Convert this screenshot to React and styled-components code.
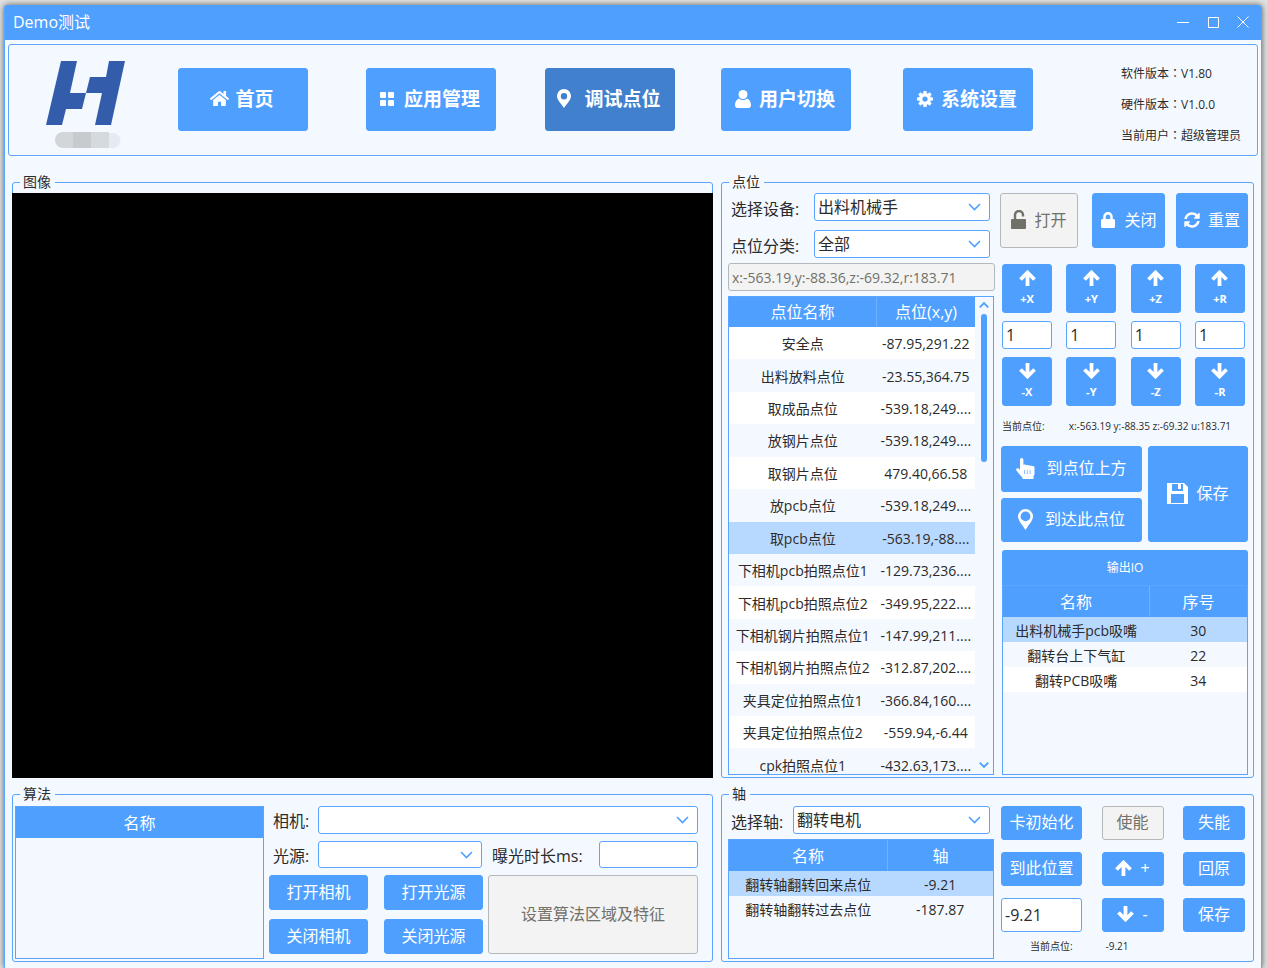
import React from "react";
import styled, { createGlobalStyle, css } from "styled-components";
import { FaHome, FaLock, FaSyncAlt } from "react-icons/fa";

const blue = "#4f9fff";
const line = "#5aa5ff";
const pale = "#f4f9ff";
const selected = "#b8d9ff";
const ink = "#2b2b2b";

const GlobalStyle = createGlobalStyle`
  * { box-sizing: border-box; }
  body {
    margin: 0;
    background: #e2e2e2;
    color: ${ink};
    font-family: "Open Sans", "Noto Sans CJK SC", sans-serif;
    font-size: 16px;
    line-height: 20px;
  }
  button, input, select { font: inherit; margin: 0; }
`;

const Window = styled.div`
  margin: 5px 5px 0 4px;
  min-height: calc(100vh - 5px);
  border: 1px solid ${line};
  border-top: 0;
  border-bottom: 0;
  border-radius: 3px 3px 0 0;
  background: ${pale};
  box-shadow: 0 0 6px rgba(0, 0, 0, 0.6);
`;

const TitleBar = styled.header`
  display: flex;
  align-items: center;
  justify-content: space-between;
  height: 35px;
  padding: 0 12px 2px 8px;
  border-radius: 2px 2px 0 0;
  background: ${blue};
  color: #fff;
`;

const WindowTools = styled.div`
  display: flex;
  gap: 18px;
`;

const WindowTool = styled.button`
  display: flex;
  padding: 0;
  border: 0;
  background: none;
  color: #fff;
`;

const Top = styled.nav`
  display: grid;
  grid-template-columns: 169fr 188fr 179fr 176fr 182fr 218fr 136fr;
  align-items: start;
  height: 112px;
  margin: 4px 3px 16px;
  border: 1px solid ${line};
  border-radius: 3px;
  box-shadow: 0 0 0 1px #fff;
`;

const Brand = styled.div`
  padding: 16px 0 0 37px;
`;

const Versions = styled.ul`
  display: grid;
  gap: 10px;
  margin: 0;
  padding: 18px 0 0;
  list-style: none;
  font-size: 12px;
  white-space: nowrap;
`;

const Colon = styled.span`
  font-family: "Noto Sans CJK TC", sans-serif;
`;

const Button = styled.button`
  display: flex;
  flex-direction: ${(p) => (p.$stacked ? "column" : "row")};
  align-items: center;
  justify-content: center;
  gap: ${(p) => p.$gap ?? 8}px;
  width: ${(p) => (p.$width ? `${p.$width}px` : "auto")};
  height: ${(p) => (p.$height ? `${p.$height}px` : "auto")};
  padding: 0 0 2px;
  border: 1px solid ${blue};
  border-radius: 3px;
  background: ${blue};
  color: #fff;
  white-space: nowrap;
  svg { flex: none; }
  &:disabled {
    border-color: #b5b8ba;
    background: #f3f3f3;
    color: #71716a;
  }
`;

const NavButton = styled(Button)`
  margin-top: 23px;
  padding-right: 2px;
  font-size: 19px;
  font-weight: 700;
  ${(p) => p.$active && css`
    border-color: #4080cc;
    background: #4080cc;
  `}
`;

const JogButton = styled(Button)`
  padding: 2px 0 0;
  font-size: 11px;
  font-weight: 700;
`;

const Main = styled.main`
  display: grid;
  grid-template-columns: 701fr 533fr;
  gap: 6px 8px;
  padding: 0 7px 6px;
`;

const Group = styled.fieldset`
  display: flex;
  flex-direction: column;
  min-width: 0;
  margin: 0;
  padding: 0;
  border: 1px solid ${line};
  border-radius: 3px;
`;

const Legend = styled.legend`
  margin-left: 7px;
  padding: 0 4px 0 3px;
  font-size: 14px;
  line-height: 20px;
`;

const ImageView = styled.div`
  flex: 1;
  margin: 1px -1px -1px;
  background: #000;
`;

const Split = styled.div`
  display: grid;
  flex: 1;
  grid-template-columns: 267fr 247fr;
  column-gap: 6px;
  padding: ${(p) => p.$top}px 5px 2px 6px;
`;

const Column = styled.div`
  display: flex;
  flex-direction: column;
  min-width: 0;
`;

const Field = styled.div`
  display: grid;
  grid-template-columns: ${(p) => p.$label}px 1fr;
  margin: 0 5px ${(p) => p.$after}px 3px;
`;

const Label = styled.label`
  padding-top: 6px;
  white-space: nowrap;
`;

const inputBox = css`
  width: 100%;
  min-width: 0;
  height: ${(p) => p.$height ?? 28}px;
  border: 1px solid ${line};
  border-radius: 3px;
  background: #fff;
  color: ${ink};
`;

const TextBox = styled.input`
  ${inputBox}
  padding: 0 3px;
  &:disabled {
    border-color: #b5b8ba;
    background: #f3f3f3;
    color: #71716a;
    font-size: 14px;
  }
`;

const SelectShell = styled.div`
  display: grid;
  align-items: center;
  > * { grid-area: 1 / 1; }
  svg {
    justify-self: end;
    margin-right: 9px;
    pointer-events: none;
  }
`;

const SelectBox = styled.select`
  ${inputBox}
  appearance: none;
  padding: 0 24px 0 3px;
`;

const ListBox = styled.div`
  display: grid;
  grid-template-columns: 1fr;
  align-items: start;
  flex: ${(p) => (p.$height ? "none" : 1)};
  height: ${(p) => (p.$height ? `${p.$height}px` : "auto")};
  overflow: hidden;
  border: 1px solid ${line};
`;

const PointList = styled(ListBox)`
  grid-template-columns: 1fr 18px;
  grid-template-rows: 100%;
  margin: 5px 1px 0 0;
`;

const AxisList = styled(ListBox)`
  margin-right: 1px;
`;

const Table = styled.table`
  width: 100%;
  height: ${(p) => (p.$height ? `${p.$height}px` : "auto")};
  border-collapse: collapse;
  table-layout: fixed;
  font-size: 14px;
  text-align: center;
  th, td { padding: 0; overflow: hidden; white-space: nowrap; }
  th {
    height: ${(p) => p.$head ?? 31}px;
    background: ${blue};
    color: #fff;
    font-size: 16px;
    font-weight: 400;
  }
  th + th { border-left: 1px solid #6fb0ff; }
  td {
    height: ${(p) => (p.$height ? "auto" : "25px")};
    padding-top: 2px;
  }
`;

const Row = styled.tr`
  background: ${(p) => (p.$selected ? selected : p.$odd ? "#fff" : pale)};
`;

const ScrollBar = styled.div`
  display: flex;
  flex-direction: column;
  align-items: center;
  align-self: stretch;
  gap: 5px;
  padding: 4px 0 5px;
`;

const Thumb = styled.div`
  width: 6px;
  height: 148px;
  margin-bottom: auto;
  border-radius: 3px;
  background: ${blue};
`;

const DeviceButtons = styled.div`
  display: grid;
  grid-template-columns: 92fr 84fr 72fr;
  margin: 0 0 16px -1px;
`;

const JogGrid = styled.div`
  display: grid;
  grid-template-columns: repeat(4, 50px);
  justify-content: space-between;
  row-gap: 8px;
  padding: 0 3px 0 1px;
`;

const Readout = styled.p`
  display: flex;
  gap: 24px;
  margin: 10px 0;
  padding-left: 1px;
  font-size: 10px;
  white-space: nowrap;
`;

const MoveGrid = styled.div`
  display: grid;
  grid-template-columns: 141fr 100fr;
  grid-template-rows: 46px 44px;
  gap: 6px;
  margin-bottom: 8px;
  > :last-child { grid-area: 1 / 2 / 3 / 3; }
`;

const OutputPanel = styled.section`
  display: flex;
  flex: 1;
  flex-direction: column;
  margin-left: 1px;
`;

const PanelTitle = styled.h2`
  margin: 0;
  border-radius: 3px 3px 0 0;
  background: ${blue};
  color: #fff;
  font-size: 12px;
  font-weight: 400;
  line-height: 35px;
  text-align: center;
`;

const Algorithm = styled.div`
  display: grid;
  flex: 1;
  grid-template-columns: 249fr 429fr;
  column-gap: 5px;
  padding: 2px 14px 2px 2px;
`;

const CameraForm = styled.div`
  display: grid;
  grid-template-columns: 49px 164fr 117px 99fr;
  grid-template-rows: 28px 27px;
  align-content: start;
  row-gap: 7px;
`;

const CameraLabel = styled(Label)`
  padding: 5px 0 0 ${(p) => p.$indent ?? 4}px;
`;

const Wide = styled.div`
  grid-column: span 3;
`;

const CameraButtons = styled.div`
  display: grid;
  grid-template-columns: 99fr 16fr 99fr 5fr 210fr;
  grid-template-rows: 35px 35px;
  row-gap: 9px;
  margin-top: 7px;
  > :nth-child(odd) { grid-column: 1; }
  > :nth-child(even) { grid-column: 3; }
  > :last-child { grid-area: 1 / 5 / 3 / 6; }
`;

const AxisGrid = styled.div`
  display: grid;
  grid-template-columns: 81px 62px 62px;
  grid-template-rows: 34px 34px 34px 14px;
  justify-content: space-between;
  align-content: start;
  row-gap: 12px;
  padding-right: 3px;
`;

const AxisReadout = styled.span`
  margin: -8px 0 0 ${(p) => p.$indent}px;
  font-size: 10px;
`;

const Logo = () => (
  <svg width="80" height="88" viewBox="0 0 80 88" role="img" aria-label="H">
    <path d="M15 0h16l-7 32h16l4-16h16l3-16h16L65 64H49l7-32H40l-4 16H20l-4 16H0z" fill="#335cab" />
    <path d="M17 71h1v16h-1a8 8 0 0 1 0-16z" fill="#d2d6d8" />
    <path d="M17 71h10v16H17z" fill="#d2d6d8" />
    <path d="M27 71h18v16H27z" fill="#c7cbcd" />
    <path d="M45 71h18v16H45z" fill="#d5dadf" />
    <path d="M63 72h4a7 7 0 0 1 0 15h-4z" fill="#e5ebf2" />
  </svg>
);

const Chevron = ({ up, size = 13, weight = 1.6 }) => (
  <svg width={size} height="8" viewBox="0 0 13 8" fill="none" stroke={blue} strokeWidth={weight} aria-hidden="true">
    <path d={up ? "M1 7l5.500-5.500L12 7" : "M1 1l5.500 5.500L12 1"} />
  </svg>
);

const Tiles = () => (
  <svg width="14" height="14" viewBox="0 0 14 14" fill="currentColor" aria-hidden="true">
    <rect width="6" height="6" rx="1" />
    <rect x="8" width="6" height="6" rx="1" />
    <rect y="8" width="6" height="6" rx="1" />
    <rect x="8" y="8" width="6" height="6" rx="1" />
  </svg>
);

const Person = () => (
  <svg width="16" height="18" viewBox="0 0 16 18" fill="currentColor" aria-hidden="true">
    <circle cx="8" cy="4.500" r="4.500" />
    <path d="M4 8.500a6 6 0 0 0 8 0c2.500.7 4 3.500 4 6.500 0 2-1 3-2.500 3h-11C1 18 0 17 0 15c0-3 1.500-5.800 4-6.500z" />
  </svg>
);

const Gear = () => (
  <svg width="16" height="16" viewBox="0 0 16 16" fill="currentColor" aria-hidden="true">
    <circle cx="8" cy="8" r="4.300" fill="none" stroke="currentColor" strokeWidth="3.400" />
    {[0, 45, 90, 135, 180, 225, 270, 315].map((a) => (
      <path key={a} d="M6.500 0h3l.3 3H6.200z" transform={`rotate(${a} 8 8)`} />
    ))}
  </svg>
);

const OpenLock = () => (
  <svg width="15" height="19" viewBox="0 0 15 19" fill="currentColor" aria-hidden="true">
    <path d="M1 9h13a1 1 0 0 1 1 1v8a1 1 0 0 1-1 1H1a1 1 0 0 1-1-1v-8a1 1 0 0 1 1-1z" />
    <path d="M4 10V5a4 4 0 0 1 8 0v1.500" fill="none" stroke="currentColor" strokeWidth="2.400" />
  </svg>
);

const Hand = () => (
  <svg width="19" height="21" viewBox="0 0 19 21" aria-hidden="true">
    <path
      d="M4 1.700a1.700 1.700 0 0 1 3.400 0V7c.8-.6 2.600-.5 3.100.3.800-.6 2.500-.4 3 .5.700-.5 1.900-.4 2.400.3 1.200-.4 2.600.2 2.600 1.600V16l-1 2.500V21H6.500v-1.500L4 17 .4 12.500c-1-1.400.6-3 2.100-2L4 11.700z"
      fill="currentColor"
    />
    <path d="M8.500 12v4M11.300 12v4M14.100 12v4" stroke={blue} strokeWidth=".7" />
  </svg>
);

const PinSolid = () => (
  <svg width="14" height="19" viewBox="0 0 14 19" fill="currentColor" fillRule="evenodd" aria-hidden="true">
    <path d="M7 0a7 7 0 0 1 7 7c0 4-4 7.500-7 12C4 14.500 0 11 0 7a7 7 0 0 1 7-7zm0 4a3.200 3.200 0 1 0 0 6.400A3.200 3.200 0 0 0 7 4z" />
  </svg>
);

const PinHollow = () => (
  <svg width="15" height="21" viewBox="0 0 15 21" fill="currentColor" fillRule="evenodd" aria-hidden="true">
    <path d="M7.500 0A7.500 7.500 0 0 1 15 7.500c0 4-4.500 8.500-7.500 13.500C4.500 16 0 11.500 0 7.500A7.500 7.500 0 0 1 7.500 0zm0 2.500a4.900 4.900 0 1 0 0 9.800 4.900 4.900 0 0 0 0-9.800z" />
  </svg>
);

const Arrow = ({ down }) => (
  <svg width="17" height="16" viewBox="0 0 17 16" fill="none" stroke="currentColor" strokeWidth="3.800" aria-hidden="true">
    <path d={down ? "M8.500 0v13M1.500 6.500l7 7 7-7" : "M8.500 16V3M1.500 9.500l7-7 7 7"} />
  </svg>
);

const Disk = () => (
  <svg width="21" height="21" viewBox="0 0 21 21" fill="currentColor" fillRule="evenodd" aria-hidden="true">
    <path d="M0 0h17l4 4v17H0zM5 1v7h11V1h-2v5h-3V1zM4 11v9h13v-9z" />
  </svg>
);

const Combo = ({ id, options = [], height }) => (
  <SelectShell>
    <SelectBox id={id} $height={height}>
      {options.map((o) => <option key={o}>{o}</option>)}
    </SelectBox>
    <Chevron />
  </SelectShell>
);

const DataTable = ({ heads, rows, widths, active, ...rest }) => (
  <Table {...rest}>
    <colgroup>{widths.map((w, i) => <col key={i} width={w} />)}</colgroup>
    <thead><tr>{heads.map((h) => <th key={h} scope="col">{h}</th>)}</tr></thead>
    <tbody>
      {rows.map((r, i) => (
        <Row key={r[0]} $odd={i % 2 === 0} $selected={i === active}>
          {r.map((c, j) => <td key={j}>{c}</td>)}
        </Row>
      ))}
    </tbody>
  </Table>
);

const points = [
  ["安全点", "-87.95,291.22"],
  ["出料放料点位", "-23.55,364.75"],
  ["取成品点位", "-539.18,249...."],
  ["放钢片点位", "-539.18,249...."],
  ["取钢片点位", "479.40,66.58"],
  ["放pcb点位", "-539.18,249...."],
  ["取pcb点位", "-563.19,-88...."],
  ["下相机pcb拍照点位1", "-129.73,236...."],
  ["下相机pcb拍照点位2", "-349.95,222...."],
  ["下相机钢片拍照点位1", "-147.99,211...."],
  ["下相机钢片拍照点位2", "-312.87,202...."],
  ["夹具定位拍照点位1", "-366.84,160...."],
  ["夹具定位拍照点位2", "-559.94,-6.44"],
  ["cpk拍照点位1", "-432.63,173...."],
];

const versions = [
  ["软件版本", "V1.80"],
  ["硬件版本", "V1.0.0"],
  ["当前用户", "超级管理员"],
];

const axes = ["X", "Y", "Z", "R"];

export default function App() {
  return (
    <>
      <GlobalStyle />
      <Window>
        <TitleBar>
          <span>Demo测试</span>
          <WindowTools>
            <WindowTool aria-label="最小化">
              <svg width="12" height="12" stroke="currentColor"><path d="M0 6.500h12" /></svg>
            </WindowTool>
            <WindowTool aria-label="最大化">
              <svg width="12" height="12" fill="none" stroke="currentColor"><path d="M1.500 1.500h10v10h-10z" /></svg>
            </WindowTool>
            <WindowTool aria-label="关闭窗口">
              <svg width="12" height="12" stroke="currentColor"><path d="M.5.5l11 11M11.500.5l-11 11" /></svg>
            </WindowTool>
          </WindowTools>
        </TitleBar>

        <Top>
          <Brand><Logo /></Brand>
          <NavButton $width={130} $height={63} $gap={6}><FaHome size={19} />首页</NavButton>
          <NavButton $width={130} $height={63} $gap={10}><Tiles />应用管理</NavButton>
          <NavButton $width={130} $height={63} $gap={13} $active><PinSolid />调试点位</NavButton>
          <NavButton $width={130} $height={63}><Person />用户切换</NavButton>
          <NavButton $width={130} $height={63}><Gear />系统设置</NavButton>
          <Versions>
            {versions.map(([name, value]) => (
              <li key={name}>{name}<Colon>：</Colon>{value}</li>
            ))}
          </Versions>
        </Top>

        <Main>
          <Group>
            <Legend>图像</Legend>
            <ImageView />
          </Group>

          <Group>
            <Legend>点位</Legend>
            <Split $top={1}>
              <Column>
                <Field $label={83} $after={9}>
                  <Label htmlFor="device">选择设备:</Label>
                  <Combo id="device" options={["出料机械手"]} />
                </Field>
                <Field $label={83} $after={5}>
                  <Label htmlFor="kind">点位分类:</Label>
                  <Combo id="kind" options={["全部"]} />
                </Field>
                <TextBox aria-label="点位坐标" disabled defaultValue="x:-563.19,y:-88.36,z:-69.32,r:183.71" />
                <PointList $height={479}>
                  <DataTable
                    heads={["点位名称", "点位(x,y)"]}
                    widths={["60%", "40%"]}
                    rows={points}
                    active={6}
                    $height={484}
                    $head={30}
                  />
                  <ScrollBar>
                    <Chevron up size={10} weight={2.4} />
                    <Thumb />
                    <Chevron size={10} weight={2.4} />
                  </ScrollBar>
                </PointList>
              </Column>

              <Column>
                <DeviceButtons>
                  <Button $width={78} $height={55} disabled><OpenLock />打开</Button>
                  <Button $width={73} $height={55}><FaLock size={16} />关闭</Button>
                  <Button $width={72} $height={55}><FaSyncAlt size={16} />重置</Button>
                </DeviceButtons>
                <JogGrid>
                  {axes.map((a) => (
                    <JogButton key={a} $height={49} $stacked $gap={3}><Arrow />+{a}</JogButton>
                  ))}
                  {axes.map((a) => <TextBox key={a} aria-label={`${a} 步长`} defaultValue="1" />)}
                  {axes.map((a) => (
                    <JogButton key={a} $height={49} $stacked $gap={3}><Arrow down />-{a}</JogButton>
                  ))}
                </JogGrid>
                <Readout>
                  <span>当前点位:</span>
                  <span>x:-563.19 y:-88.35 z:-69.32 u:183.71</span>
                </Readout>
                <MoveGrid>
                  <Button $gap={11}><Hand />到点位上方</Button>
                  <Button $gap={12}><PinHollow />到达此点位</Button>
                  <Button><Disk />保存</Button>
                </MoveGrid>
                <OutputPanel>
                  <PanelTitle>输出IO</PanelTitle>
                  <ListBox>
                    <DataTable
                      heads={["名称", "序号"]}
                      widths={["60%", "40%"]}
                      rows={[["出料机械手pcb吸嘴", "30"], ["翻转台上下气缸", "22"], ["翻转PCB吸嘴", "34"]]}
                      active={0}
                    />
                  </ListBox>
                </OutputPanel>
              </Column>
            </Split>
          </Group>

          <Group>
            <Legend>算法</Legend>
            <Algorithm>
              <ListBox>
                <DataTable heads={["名称"]} widths={["100%"]} rows={[]} />
              </ListBox>
              <div>
                <CameraForm>
                  <CameraLabel htmlFor="camera">相机:</CameraLabel>
                  <Wide><Combo id="camera" /></Wide>
                  <CameraLabel htmlFor="light">光源:</CameraLabel>
                  <Combo id="light" height={27} />
                  <CameraLabel htmlFor="exposure" $indent={10}>曝光时长ms:</CameraLabel>
                  <TextBox id="exposure" $height={27} />
                </CameraForm>
                <CameraButtons>
                  <Button>打开相机</Button>
                  <Button>打开光源</Button>
                  <Button>关闭相机</Button>
                  <Button>关闭光源</Button>
                  <Button disabled>设置算法区域及特征</Button>
                </CameraButtons>
              </div>
            </Algorithm>
          </Group>

          <Group>
            <Legend>轴</Legend>
            <Split $top={2}>
              <Column>
                <Field $label={62} $after={5}>
                  <Label htmlFor="axis">选择轴:</Label>
                  <Combo id="axis" options={["翻转电机"]} />
                </Field>
                <AxisList $height={120}>
                  <DataTable
                    heads={["名称", "轴"]}
                    widths={["60%", "40%"]}
                    rows={[["翻转轴翻转回来点位", "-9.21"], ["翻转轴翻转过去点位", "-187.87"]]}
                    active={0}
                  />
                </AxisList>
              </Column>
              <AxisGrid>
                <Button>卡初始化</Button>
                <Button disabled>使能</Button>
                <Button>失能</Button>
                <Button>到此位置</Button>
                <Button><Arrow />+</Button>
                <Button>回原</Button>
                <TextBox aria-label="轴位置" $height={34} defaultValue="-9.21" />
                <Button><Arrow down />-</Button>
                <Button>保存</Button>
                <AxisReadout $indent={29}>当前点位:</AxisReadout>
                <AxisReadout $indent={4}>-9.21</AxisReadout>
              </AxisGrid>
            </Split>
          </Group>
        </Main>
      </Window>
    </>
  );
}
